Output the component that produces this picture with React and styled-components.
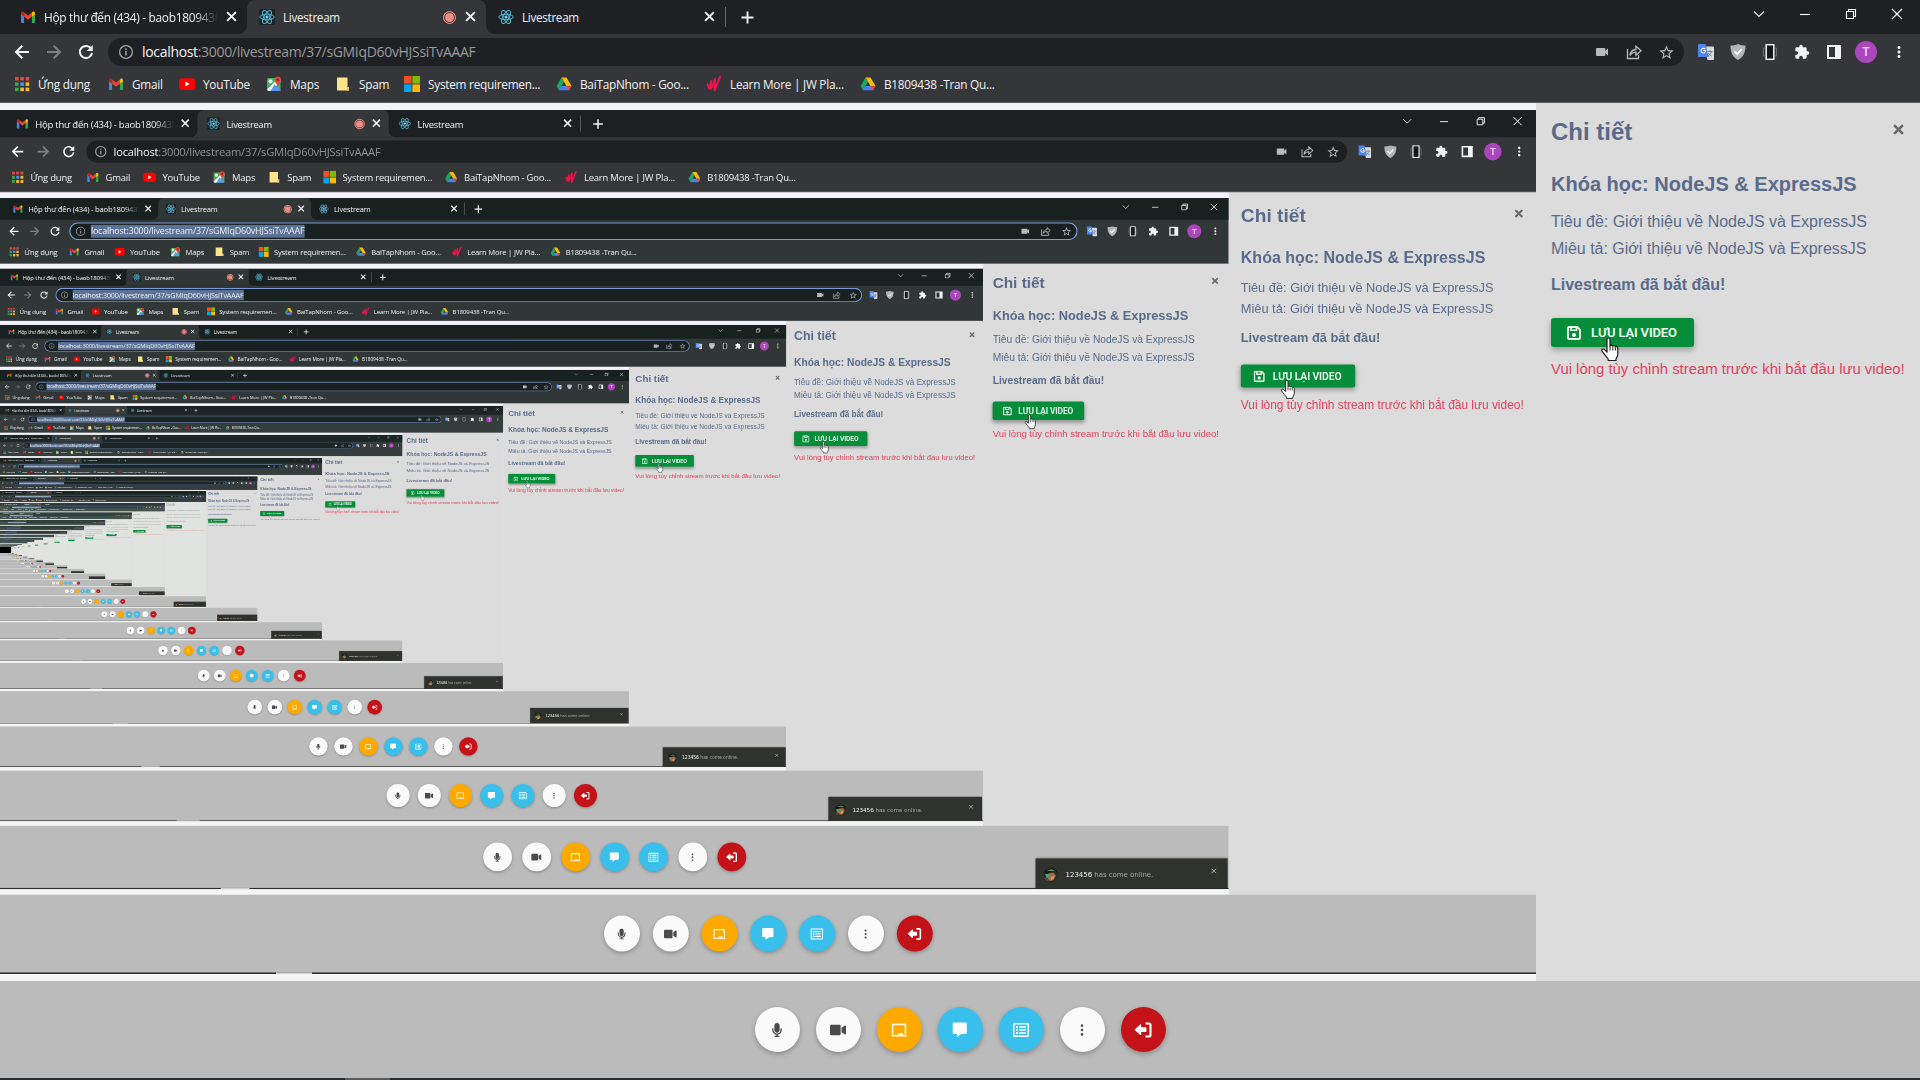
import React from "react";
import styled, { createGlobalStyle, css } from "styled-components";
import { FaMicrophone, FaVideo, FaChalkboard, FaRegListAlt } from "react-icons/fa";
import { BsThreeDotsVertical } from "react-icons/bs";
import { MdVideocam, MdExtension, MdStarBorder, MdMoreVert } from "react-icons/md";

const LAST_LEVEL = 23;

const GlobalStyle = createGlobalStyle`
  html, body { margin: 0; padding: 0; background: #dcdcdc; overflow: hidden; }
  *, *::before, *::after { box-sizing: border-box; }
  h1, h2, p { margin: 0; }
`;

const tone = (level) => {
  if (level === 0) return { strip: "#1f2023", bar: "#353639", line: "#616265", dim: "#9a9b9e" };
  if (level === 1) return { strip: "#1d2022", bar: "#343638", line: "#77787a", dim: "#8f9192" };
  if (level < 6) return { strip: "#182020", bar: "#313637", line: "#7f8182", dim: "#8f9192" };
  if (level < 11) return { strip: "#1a2524", bar: "#353d3c", line: "#6e7573", dim: "#8b9391" };
  return { strip: "#2a3c35", bar: "#44524b", line: "#5d6d65", dim: "#8b9391" };
};

const uiFont = css`font-family: "Open Sans", "Noto Sans", sans-serif;`;

const Frame = styled.div`
  width: 1920px;
  height: 1080px;
  display: flex;
  flex-direction: column;
  overflow: hidden;
  background: #dcdcdc;
  position: relative;
`;

/* ---------- browser chrome ---------- */
const Chrome = styled.header`
  height: 103px;
  flex: none;
  display: flex;
  flex-direction: column;
  background: ${(p) => p.$tone.bar};
  border-bottom: 1px solid ${(p) => p.$tone.line};
  color: #f1f3f4;
  ${uiFont}
  font-size: 12px;
`;

const TabStrip = styled.div`
  height: 34px;
  display: flex;
  background: ${(p) => p.$tone.strip};
`;

const Tab = styled.div`
  width: ${(p) => p.$w}px;
  height: 34px;
  display: flex;
  align-items: center;
  padding: 0 9px 0 ${(p) => p.$pad}px;
  position: relative;
  ${(p) => p.$active && css`
    background: ${p.$tone.bar};
    border-radius: 8px 8px 0 0;
    &::before, &::after {
      content: "";
      position: absolute;
      bottom: 0;
      width: 8px;
      height: 8px;
    }
    &::before {
      left: -8px;
      background: radial-gradient(circle at 0 0, transparent 7.5px, ${p.$tone.bar} 8px);
    }
    &::after {
      right: -8px;
      background: radial-gradient(circle at 100% 0, transparent 7.5px, ${p.$tone.bar} 8px);
    }
  `}
`;

const TabTitle = styled.span`
  flex: 1;
  margin-left: 8px;
  overflow: hidden;
  white-space: nowrap;
  font-size: ${(p) => (p.$fade ? 11.9 : 11.7)}px;
  letter-spacing: -0.3px;
  line-height: 18px;
  ${(p) => p.$fade && css`mask-image: linear-gradient(90deg, #000 86%, transparent 100%);`}
`;

const TabClose = styled.span`
  width: 12px;
  height: 12px;
  margin-left: 8px;
  display: flex;
`;

const Recording = styled.span`
  width: 13px;
  height: 13px;
  border-radius: 50%;
  background: #ee8b82;
  border: 1px solid #ee8b82;
  box-shadow: inset 0 0 0 1px #353639;
  margin-right: 1px;
`;

const StripDivider = styled.span`
  width: 1px;
  height: 20px;
  margin-top: 7px;
  background: #66686b;
`;

const NewTab = styled.span`
  display: flex;
  align-items: center;
  margin-left: 15px;
`;

const WindowControls = styled.div`
  margin-left: auto;
  height: 28px;
  display: flex;
  align-items: center;
  gap: 30px;
  padding-right: 15px;
`;

const Toolbar = styled.div`
  height: 36px;
  display: flex;
  align-items: center;
`;

const NavButtons = styled.div`
  width: 108px;
  display: flex;
  align-items: center;
  gap: 16px;
  padding-left: 14px;
`;

const Omnibox = styled.div`
  width: 1576px;
  height: 28px;
  border-radius: 14px;
  background: ${(p) => p.$tone.strip};
  display: flex;
  align-items: center;
  padding: 0 9px 0 10px;
  ${(p) => p.$focused && css`box-shadow: inset 0 0 0 2px #7c9bd6;`}
`;

const Address = styled.span`
  margin-left: 8px;
  font-size: 14px;
  letter-spacing: -0.32px;
  line-height: 20px;
  white-space: nowrap;
  color: ${(p) => (p.$focused ? "#e9edf3" : p.$tone.dim)};
  background: ${(p) => (p.$focused ? "#5c7193" : "transparent")};
  b { font-weight: 400; color: #f3f4f5; }
`;

const OmniActions = styled.div`
  margin-left: auto;
  display: flex;
  gap: 16px;
  color: #b9babd;
`;

const Extensions = styled.div`
  display: flex;
  align-items: center;
  gap: 16px;
  padding-left: 14px;
`;

const Avatar = styled.span`
  width: 22px;
  height: 22px;
  margin: 0 -3px;
  border-radius: 50%;
  background: #ab47bc;
  color: #f6dcfa;
  display: flex;
  align-items: center;
  justify-content: center;
  font: 500 12px Roboto, sans-serif;
`;

const Bookmarks = styled.div`
  height: 28px;
  display: flex;
  align-items: center;
  padding-left: 14px;
`;

const Bookmark = styled.span`
  width: ${(p) => p.$w}px;
  display: flex;
  align-items: center;
  gap: 8px;
  white-space: nowrap;
  font-size: 11.8px;
  letter-spacing: -0.25px;
  svg { flex: none; }
`;

/* ---------- page ---------- */
const Page = styled.main`
  height: 878px;
  display: flex;
`;

const VideoArea = styled.section`
  width: 1536px;
  height: 878px;
  padding: 7px 0;
  background: linear-gradient(#f4f3fa 50%, #f5f5f5 50%);
`;

const VideoFrame = styled.div`
  width: 1536px;
  height: 864px;
  overflow: hidden;
  background: ${(p) => (p.$empty ? "#000" : "#dcdcdc")};
`;

const Shrink = styled.div`
  width: 1920px;
  height: 1080px;
  transform: scale(0.8);
  transform-origin: 0 0;
`;

const Panel = styled.aside`
  width: 384px;
  padding: 13px 15px 0;
  background: ${(p) => (p.$deep ? "#e0e3e0" : "#dcdcdc")};
  color: ${(p) => (p.$deep ? "#9aa8a4" : "#596a8b")};
  font-family: "Liberation Sans", Arial, sans-serif;
  font-size: 16px;
  line-height: 27px;
  white-space: nowrap;
`;

const PanelHead = styled.div`
  display: flex;
  justify-content: space-between;
  height: 54px;
  svg { margin: 8px 1px 0 0; }
`;

const PanelTitle = styled.h1`
  font-size: 24px;
  line-height: 32px;
`;

const Course = styled.h2`
  font-size: 20px;
  line-height: 28px;
  margin-bottom: 10px;
`;

const Status = styled.p`
  font-weight: 700;
  margin: 9px 0 20px;
`;

const SaveButton = styled.div`
  position: relative;
  width: 143px;
  height: 29px;
  display: flex;
  align-items: center;
  gap: 10px;
  padding-left: 16px;
  border-radius: 3px;
  background: #068d39;
  color: #eefbf1;
  font: 600 13px Roboto, sans-serif;
  letter-spacing: -0.15px;
  box-shadow: 0 3px 6px rgba(0, 0, 0, 0.3);
`;

const Pointer = styled.svg`
  position: absolute;
  left: 49px;
  top: 19px;
`;

const Warning = styled.p`
  margin-top: 9px;
  color: ${(p) => (p.$deep ? "#e3a39a" : "#e4405c")};
  font-size: 14.9px;
`;

const CallBar = styled.footer`
  height: 97px;
  flex: none;
  background: #bbbbbb;
  display: flex;
  align-items: center;
  justify-content: center;
  gap: 16px;
`;

const BottomEdge = styled.div`
  height: 2px;
  flex: none;
  padding-left: 345px;
  background: #2b2c2d;
  &::before {
    content: "";
    display: block;
    width: 45px;
    height: 2px;
    background: ${(p) => (p.$nested ? "#cfcfcf" : "#5b5a5b")};
  }
`;

const palette = {
  plain: ["#fafafa", "#4b4b4b"],
  share: ["#fda900", "#fff6dd"],
  info: ["#39bfeb", "#ffffff"],
  leave: ["#c41219", "#ffffff"],
};

const RoundButton = styled.span`
  width: 45px;
  height: 45px;
  border-radius: 50%;
  display: flex;
  align-items: center;
  justify-content: center;
  background: ${(p) => palette[p.$kind][0]};
  color: ${(p) => palette[p.$kind][1]};
  box-shadow: 0 2px 5px rgba(0, 0, 0, 0.28);
`;

const Toast = styled.div`
  position: absolute;
  right: 2px;
  bottom: 1px;
  width: 300px;
  height: 47px;
  display: flex;
  align-items: center;
  padding: 4px 17px 0 11px;
  background: #30322e;
  color: #a9aaa8;
  font: 11px "DejaVu Sans", Verdana, sans-serif;
  box-shadow: 0 0 3px rgba(0, 0, 0, 0.4);
  b { color: #f2f2f2; font-weight: 400; }
  p { flex: 1; margin-left: 11px; letter-spacing: -0.1px; white-space: nowrap; }
  > svg:last-child { margin-bottom: 13px; }
`;

/* ---------- icons ---------- */
const Cross = ({ size = 10, w = 1.8, color = "#f1f3f4" }) => (
  <svg width={size} height={size} viewBox="0 0 10 10">
    <path d="M1 1l8 8M9 1l-8 8" stroke={color} strokeWidth={w} fill="none" />
  </svg>
);

const GmailIcon = () => (
  <svg width="16" height="16" viewBox="0 0 16 16">
    <path d="M1 4v9.2c0 .5.4.8.8.8h2.3V7.4z" fill="#4285f4" />
    <path d="M15 4v9.2c0 .5-.4.8-.8.8h-2.3V7.4z" fill="#34a853" />
    <path d="M4.1 3.4v4.3L8 10.7l3.9-3V3.4L8 6.4z" fill="#ea4335" />
    <path d="M1 4.2v1.3l3.1 2.3V3.4l-.6-.5C2.500 2.200 1 2.900 1 4.200z" fill="#c5221f" />
    <path d="M15 4.200v1.300l-3.100 2.300V3.400l.6-.5C13.500 2.200 15 2.900 15 4.200z" fill="#fbbc04" />
  </svg>
);

const ReactIcon = () => (
  <svg width="16" height="16" viewBox="0 0 16 16">
    <rect width="16" height="16" rx="1" fill="#1c2327" />
    <g fill="none" stroke="#56b5cb" strokeWidth="1">
      <ellipse cx="8" cy="8" rx="7.200" ry="2.800" />
      <ellipse cx="8" cy="8" rx="7.200" ry="2.800" transform="rotate(60 8 8)" />
      <ellipse cx="8" cy="8" rx="7.200" ry="2.800" transform="rotate(120 8 8)" />
    </g>
    <circle cx="8" cy="8" r="1.500" fill="#61dafb" />
  </svg>
);

const appColors = ["#e8453c", "#e8453c", "#e8453c", "#34a853", "#4a90f5", "#f9bb2d", "#34a853", "#f9bb2d", "#f9bb2d"];
const AppsIcon = () => (
  <svg width="16" height="16" viewBox="0 0 16 16">
    {appColors.map((c, i) => (
      <rect key={i} x={1 + (i % 3) * 5.300} y={1 + Math.floor(i / 3) * 5.300} width="3.600" height="3.600" fill={c} />
    ))}
  </svg>
);

const YouTubeIcon = () => (
  <svg width="16" height="16" viewBox="0 0 16 16">
    <rect x="0" y="2.300" width="16" height="11.600" rx="3" fill="#f00" />
    <path d="M6.400 5.600v5l4.200-2.500z" fill="#fff" />
  </svg>
);

const MapsIcon = () => (
  <svg width="16" height="16" viewBox="0 0 16 16">
    <rect x="1" y="2" width="13.500" height="13" rx="1.500" fill="#4caf60" />
    <path d="M1 13.500L12.500 2l2 2v2L4.500 15H2.500z" fill="#f5f5f5" />
    <path d="M8.500 8.500l6 5.500v1h-10z" fill="#5c97f2" />
    <circle cx="4.500" cy="5.300" r="2" fill="#e9f6ea" />
    <path d="M11.800.500a3.200 3.200 0 0 1 3.200 3.200c0 2.300-3.200 5.800-3.200 5.800S8.600 6 8.600 3.700A3.200 3.200 0 0 1 11.800.500z" fill="#e04438" />
    <circle cx="11.800" cy="3.800" r="1.100" fill="#7b1a15" />
  </svg>
);

const FolderIcon = () => (
  <svg width="16" height="16" viewBox="0 0 16 16">
    <path d="M2 1.500h10.500V11H14v3.500H2z" fill="#fde48c" />
    <path d="M12.500 11H14v3.500h-2.500z" fill="#e9c55c" />
  </svg>
);

const MicrosoftIcon = () => (
  <svg width="16" height="16" viewBox="0 0 16 16">
    <rect width="7.600" height="7.600" fill="#f25022" />
    <rect x="8.400" width="7.600" height="7.600" fill="#7fba00" />
    <rect y="8.400" width="7.600" height="7.600" fill="#00a4ef" />
    <rect x="8.400" y="8.400" width="7.600" height="7.600" fill="#ffb900" />
  </svg>
);

const DriveIcon = () => (
  <svg width="16" height="16" viewBox="0 0 16 16">
    <path d="M5.500 1.500L.500 10l2.500 4.300L8 5.800z" fill="#1fa463" />
    <path d="M5.500 1.500h5L15.500 10h-5z" fill="#fbbc04" />
    <path d="M5.500 10h10L13 14.300H3z" fill="#4285f4" />
    <path d="M10.500 10h5L13 14.300z" fill="#ea4335" />
  </svg>
);

const JwIcon = () => (
  <svg width="16" height="16" viewBox="0 0 16 16">
    <path d="M1.500 8.500l1.500 4 2-7.500v8l4-10-.5 11.500L14 1" fill="none" stroke="#f0114a" strokeWidth="2" strokeLinejoin="round" strokeLinecap="round" />
  </svg>
);

const BackIcon = ({ color, flip }) => (
  <svg width="16" height="16" viewBox="0 0 16 16" transform={flip ? "scale(-1 1)" : undefined}>
    <path d="M15 8H2.500M8.300 1.700L2 8l6.300 6.300" stroke={color} strokeWidth="2" fill="none" />
  </svg>
);

const ReloadIcon = () => (
  <svg width="16" height="16" viewBox="0 0 16 16">
    <path d="M13.300 5A6.100 6.100 0 1 0 14 9" stroke="#f1f3f4" strokeWidth="2" fill="none" />
    <path d="M14.800 1v6H8.800z" fill="#f1f3f4" />
  </svg>
);

const InfoIcon = () => (
  <svg width="16" height="16" viewBox="0 0 16 16">
    <circle cx="8" cy="8" r="6.400" stroke="#a5a6a9" strokeWidth="1.300" fill="none" />
    <path d="M8 7v4.500M8 4.300v1.500" stroke="#a5a6a9" strokeWidth="1.500" />
  </svg>
);

const ShareIcon = () => (
  <svg width="16" height="16" viewBox="0 0 16 16" fill="none" stroke="#b9babd" strokeWidth="1.300">
    <path d="M1.500 5v9.500h11V11" />
    <path d="M4 11.500c.4-3.700 2.500-5.800 6-6V2.200l5 4.500-5 4.500V8.200c-2.800 0-4.600 1-6 3.300z" />
  </svg>
);

const TranslateIcon = () => (
  <svg width="16" height="16" viewBox="0 0 16 16">
    <path d="M6 2.500h9a1 1 0 0 1 1 1V15a1 1 0 0 1-1 1H9.500z" fill="#dadce0" />
    <path d="M9.500 7.500h5M12 6v1.500m1.500 0c-.5 2-2 3.500-3.500 4.500m.5-3c.7 1.500 1.800 2.500 3.200 3.200" stroke="#76808c" strokeWidth="1" fill="none" />
    <path d="M1 0h6.500l3.200 13H1a1 1 0 0 1-1-1V1a1 1 0 0 1 1-1z" fill="#4a86ee" />
    <path d="M7.200 5.200a2.300 2.300 0 1 0 .5 1.600H5.400" stroke="#fff" strokeWidth="1.100" fill="none" />
  </svg>
);

const ShieldIcon = () => (
  <svg width="16" height="16" viewBox="0 0 16 16">
    <path d="M8 0c2.300 1 4.800 1.500 7.500 1.500 0 7-2 11.500-7.500 14.500C2.500 13 .5 8.500.5 1.500 3.200 1.500 5.700 1 8 0z" fill="#b3b4b6" />
    <path d="M4.500 7.500l2.700 2.700 4.500-5" stroke="#fff" strokeWidth="1.800" fill="none" />
  </svg>
);

const DeviceIcon = () => (
  <svg width="16" height="16" viewBox="0 0 16 16">
    <path d="M3 4H1.500v8H3M13 4h1.500v8H13" stroke="#6b6c6f" fill="none" />
    <rect x="4.200" y=".700" width="7.600" height="14.600" fill="#151617" stroke="#fff" strokeWidth="1.400" />
  </svg>
);

const SidePanelIcon = () => (
  <svg width="16" height="16" viewBox="0 0 16 16">
    <path d="M1 1h14v14H1z M3 3v10h6V3z" fill="#f1f3f4" fillRule="evenodd" />
  </svg>
);

const SaveIcon = () => (
  <svg width="14" height="14" viewBox="0 0 14 14" fill="none" stroke="#eefbf1">
    <path d="M1 2a1 1 0 0 1 1-1h8.200L13 3.800V12a1 1 0 0 1-1 1H2a1 1 0 0 1-1-1z" strokeWidth="1.900" />
    <path d="M4 1v3.300h5.500V1" strokeWidth="1.600" />
    <circle cx="7" cy="8.900" r="2" fill="#eefbf1" stroke="none" />
  </svg>
);

const ChatIcon = () => (
  <svg width="16" height="16" viewBox="0 0 16 16">
    <path d="M2 .5h11.500a1.300 1.300 0 0 1 1.300 1.300v8.900a1.300 1.300 0 0 1-1.300 1.300H9.300l-4.300 3.300V12H2a1.300 1.300 0 0 1-1.300-1.300V1.800A1.300 1.300 0 0 1 2 .5z" fill="#fff" />
  </svg>
);

const LeaveIcon = () => (
  <svg width="18" height="16" viewBox="0 0 18 16">
    <path d="M11.500 1.500h3.500a1.500 1.500 0 0 1 1.500 1.500v10a1.500 1.500 0 0 1-1.500 1.500h-3.500" stroke="#fff" strokeWidth="2.100" fill="none" />
    <path d="M.5 7.700l5.700-5.200q1-.6 1 .7v2.100h4.400a.8.800 0 0 1 .8.800v3.200a.8.800 0 0 1-.8.800H7.200v2.100q0 1.300-1 .7z" fill="#fff" />
  </svg>
);

const GamerIcon = () => (
  <svg width="25" height="25" viewBox="0 0 25 25">
    <circle cx="12.500" cy="12.500" r="12" fill="#2a2d26" />
    <path d="M3 8c3-5 12-7 18-3l2 4-9-2-9 4z" fill="#11140f" />
    <path d="M5 7l9-3 7 3-9-.500z" fill="#6f8f68" />
    <path d="M8 11l9-2 4 5-4 7-6 1-4-5z" fill="#a06d45" />
    <path d="M4 11l6 1 1 4-5 1z" fill="#42a58f" />
    <path d="M13 16l5-2-1 5-4 2z" fill="#d79a62" />
    <path d="M2 17l5 1 3 5-5-2z" fill="#6b4b30" />
  </svg>
);

const HandPointer = () => (
  <Pointer width="20" height="26" viewBox="0 0 20 26">
    <path
      d="M7 2.500c0-2 3-2 3 0V9c.3-1.300 2.700-1.100 2.800.300.500-1.100 2.500-.800 2.600.700.700-.9 2.400-.5 2.400 1.100v6.400c0 1.500-1.300 3-1.800 4.500v1.500H8.200V22C7 20.500 4.500 17.500 2 14.200c-.9-1.500.9-2.900 2.400-1.700L7 15z"
      fill="#fff"
      stroke="#1c1c1c"
      strokeWidth="1.200"
      strokeLinejoin="round"
    />
    <path d="M10 9v4.500M12.800 10v3.500M15.400 10.500v3" stroke="#1c1c1c" strokeWidth="1" />
  </Pointer>
);

/* ---------- sections ---------- */
const bookmarks = [
  [AppsIcon, "Ứng dụng", 94],
  [GmailIcon, "Gmail", 71],
  [YouTubeIcon, "YouTube", 87],
  [MapsIcon, "Maps", 69],
  [FolderIcon, "Spam", 69],
  [MicrosoftIcon, "System requiremen...", 152],
  [DriveIcon, "BaiTapNhom - Goo...", 150],
  [JwIcon, "Learn More | JW Pla...", 154],
  [DriveIcon, "B1809438 -Tran Qu...", 150],
];

function BrowserChrome({ level }) {
  const t = tone(level);
  const focused = level > 1;
  return (
    <Chrome $tone={t}>
      <TabStrip $tone={t}>
        <Tab $w={247} $pad={20} $tone={t}>
          <GmailIcon />
          <TabTitle $fade>Hộp thư đến (434) - baob1809438</TabTitle>
          <TabClose><Cross size={11} /></TabClose>
        </Tab>
        <Tab $w={239} $pad={12} $tone={t} $active>
          <ReactIcon />
          <TabTitle>Livestream</TabTitle>
          <Recording />
          <TabClose><Cross size={11} /></TabClose>
        </Tab>
        <Tab $w={239} $pad={12} $tone={t}>
          <ReactIcon />
          <TabTitle>Livestream</TabTitle>
          <TabClose><Cross size={11} /></TabClose>
        </Tab>
        <StripDivider />
        <NewTab>
          <svg width="13" height="13" viewBox="0 0 13 13"><path d="M6.500.500v12M.500 6.500h12" stroke="#f1f3f4" strokeWidth="1.900" /></svg>
        </NewTab>
        <WindowControls>
          <svg width="16" height="10" viewBox="0 0 16 10"><path d="M3 2.500l5 5 5-5" stroke="#e8eaed" strokeWidth="1.100" fill="none" /></svg>
          <svg width="16" height="10" viewBox="0 0 16 10"><path d="M3 5.500h10" stroke="#fff" strokeWidth="1.100" /></svg>
          <svg width="16" height="12" viewBox="0 0 16 12"><path d="M3.500 3.500h7v7h-7zM5.500 3.500v-2h7v7h-2" stroke="#fff" strokeWidth="1.100" fill="none" /></svg>
          <svg width="16" height="12" viewBox="0 0 16 12"><path d="M3 1l10 10M13 1L3 11" stroke="#fff" strokeWidth="1.200" /></svg>
        </WindowControls>
      </TabStrip>
      <Toolbar>
        <NavButtons>
          <BackIcon color="#f1f3f4" />
          <BackIcon color="#7f8083" flip />
          <ReloadIcon />
        </NavButtons>
        <Omnibox $tone={t} $focused={focused}>
          <InfoIcon />
          <Address $tone={t} $focused={focused}>
            <b>localhost</b>:3000/livestream/37/sGMIqD60vHJSsiTvAAAF
          </Address>
          <OmniActions>
            <MdVideocam size={16} />
            <ShareIcon />
            <MdStarBorder size={17} />
          </OmniActions>
        </Omnibox>
        <Extensions>
          <TranslateIcon />
          <ShieldIcon />
          <DeviceIcon />
          <MdExtension size={16} />
          <SidePanelIcon />
          <Avatar>T</Avatar>
          <MdMoreVert size={18} />
        </Extensions>
      </Toolbar>
      <Bookmarks>
        {bookmarks.map(([Icon, label, w]) => (
          <Bookmark key={label} $w={w}><Icon />{label}</Bookmark>
        ))}
      </Bookmarks>
    </Chrome>
  );
}

function DetailsPanel({ deep }) {
  return (
    <Panel $deep={deep}>
      <PanelHead>
        <PanelTitle>Chi tiết</PanelTitle>
        <Cross size={11} w={2.400} color="#6a6a6a" />
      </PanelHead>
      <Course>Khóa học: NodeJS &amp; ExpressJS</Course>
      <p>Tiêu đề: Giới thiệu về NodeJS và ExpressJS</p>
      <p>Miêu tả: Giới thiệu về NodeJS và ExpressJS</p>
      <Status>Livestream đã bắt đầu!</Status>
      <SaveButton>
        <SaveIcon />
        LƯU LẠI VIDEO
        <HandPointer />
      </SaveButton>
      <Warning $deep={deep}>Vui lòng tùy chỉnh stream trước khi bắt đầu lưu video!</Warning>
    </Panel>
  );
}

function CallControls() {
  return (
    <CallBar>
      <RoundButton $kind="plain"><FaMicrophone size={14} /></RoundButton>
      <RoundButton $kind="plain"><FaVideo size={16} /></RoundButton>
      <RoundButton $kind="share"><FaChalkboard size={16} /></RoundButton>
      <RoundButton $kind="info"><ChatIcon /></RoundButton>
      <RoundButton $kind="info"><FaRegListAlt size={16} /></RoundButton>
      <RoundButton $kind="plain"><BsThreeDotsVertical size={14} /></RoundButton>
      <RoundButton $kind="leave"><LeaveIcon /></RoundButton>
    </CallBar>
  );
}

function Screen({ level }) {
  const innermost = level + 1 >= LAST_LEVEL;
  return (
    <Frame>
      <BrowserChrome level={level} />
      <Page>
        <VideoArea>
          <VideoFrame $empty={innermost}>
            {!innermost && (
              <Shrink><Screen level={level + 1} /></Shrink>
            )}
          </VideoFrame>
        </VideoArea>
        <DetailsPanel deep={level > 9} />
      </Page>
      <CallControls />
      <BottomEdge $nested={level > 0} />
      {level > 1 && (
        <Toast>
          <GamerIcon />
          <p><b>123456</b> has come online.</p>
          <Cross size={9} w={1.500} color="#c9c9c9" />
        </Toast>
      )}
    </Frame>
  );
}

export default function App() {
  return (
    <>
      <GlobalStyle />
      <Screen level={0} />
    </>
  );
}
